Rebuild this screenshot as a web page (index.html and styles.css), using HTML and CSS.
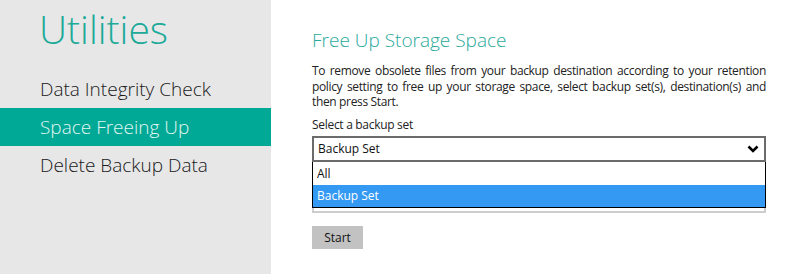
FILE: index.html
```html
<!DOCTYPE html>
<html lang="en">
<head>
    <meta charset="UTF-8">
    <meta name="viewport" content="width=device-width, initial-scale=1.0">
    <title>Utilities</title>
    <link rel="stylesheet" href="styles.css">
</head>
<body>
    <div class="page">
        <aside class="sidebar">
            <h1 class="sidebar-title">Utilities</h1>
            <ul class="menu">
                <li class="menu-item">Data Integrity Check</li>
                <li class="menu-item active">Space Freeing Up</li>
                <li class="menu-item">Delete Backup Data</li>
            </ul>
        </aside>

        <main class="content">
            <h2 class="content-title">Free Up Storage Space</h2>
            <p class="intro">To remove obsolete files from your backup destination according to your retention policy setting to free up your storage space, select backup set(s), destination(s) and then press Start.</p>

            <label class="field-label">Select a backup set</label>
            <div class="select">
                <span>Backup Set</span>
                <svg class="chevron" width="12" height="8" viewBox="0 0 12 8">
                    <path d="M1.5 1.5 L6 6 L10.5 1.5" fill="none" stroke="#000" stroke-width="2.6"/>
                </svg>
            </div>
            <ul class="dropdown">
                <li class="option first">All</li>
                <li class="option selected">Backup Set</li>
            </ul>
            <div class="dropdown-under"></div>

            <button class="start-btn" type="button">Start</button>
        </main>
    </div>
</body>
</html>
```

FILE: styles.css
```css
body { margin: 0; font-family: "Open Sans", "Noto Sans", sans-serif; background: #fff; }
ul { list-style: none; margin: 0; padding: 0; }

.page {
    display: flex;
    height: 274px;
}

.sidebar {
    width: 271px;
    flex-shrink: 0;
    background-color: #e7e7e7;
}

.sidebar-title {
    margin: 0;
    height: 70px;
    padding-left: 39px;
    font-size: 39px;
    font-weight: 300;
    line-height: 58px;
    color: #1caa99;
}

.menu-item {
    height: 38px;
    line-height: 38px;
    padding-left: 40px;
    font-size: 19px;
    font-weight: 300;
    color: #1a1a1a;
}

.menu-item.active {
    background-color: #00a896;
    color: #e0f7f2;
}

.content {
    flex: 1;
    padding: 26px 40px 0 41px;
}

.content-title {
    margin: 0 0 9px;
    font-size: 19px;
    font-weight: 300;
    line-height: 28px;
    color: #29a99b;
}

.intro {
    width: 454px;
    margin: 0 0 6px;
    font-size: 12px;
    line-height: 15.5px;
    letter-spacing: -0.35px;
    text-align: justify;
    color: #222;
}

.field-label {
    display: block;
    font-size: 12px;
    line-height: 17px;
    letter-spacing: -0.3px;
    color: #222;
}

.select {
    box-sizing: border-box;
    width: 454px;
    height: 26px;
    margin-top: 3px;
    padding: 0 4px;
    display: flex;
    align-items: center;
    justify-content: space-between;
    border: 2px solid #6b6b6b;
    font-size: 12px;
    color: #111;
}

.chevron { margin-right: 1px; }

.dropdown {
    box-sizing: border-box;
    width: 454px;
    border: 1px solid #000;
    border-top: none;
    background: #fff;
}

.option {
    height: 22px;
    line-height: 22px;
    padding-left: 4px;
    font-size: 12px;
    color: #111;
}

.option.first {
    height: 23px;
    line-height: 23px;
}

.option.selected {
    background-color: #3399f3;
    color: #fff;
}

.dropdown-under {
    box-sizing: border-box;
    width: 454px;
    height: 5px;
    border: 2px solid #cdcdcd;
    border-top: none;
}

.start-btn {
    display: block;
    width: 51px;
    height: 23px;
    margin-top: 13px;
    padding: 0;
    border: none;
    background-color: #c2c2c2;
    font-family: inherit;
    font-size: 12px;
    color: #111;
}
```
